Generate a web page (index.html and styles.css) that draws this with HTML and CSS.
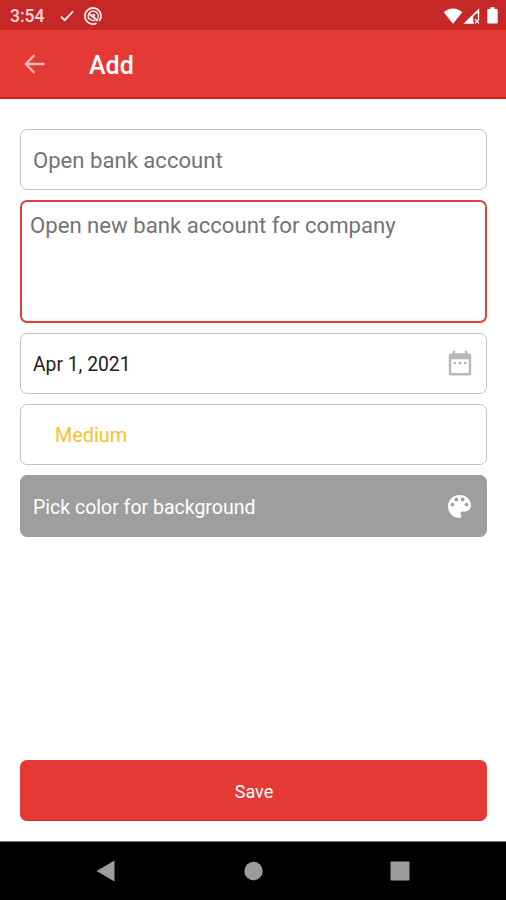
FILE: index.html
```html
<!DOCTYPE html>
<html lang="en">
<head>
<meta charset="utf-8">
<title>Add</title>
<link rel="stylesheet" href="styles.css">
</head>
<body>
<div class="screen">
  <div class="status-bar">
    <span class="clock">3:54</span>
    <svg class="status-check" width="14" height="12" viewBox="0 0 14 12"><path d="M1 6.6 4.7 10.2 13 1.4" fill="none" stroke="#ffeceb" stroke-width="1.8"/></svg>
    <svg class="status-app" width="18" height="18" viewBox="0 0 18 18" fill="none" stroke="#ffeceb"><path d="M12.500 16.200A8 8 0 1 1 15.200 14" stroke-width="1.800"/><path d="M12.800 12.700A5 5 0 1 0 5.300 12.300" stroke-width="1.500"/><path d="M4.800 6.500 13.500 13.700" stroke-width="1.900"/><path d="M5.300 11q1.700 3.200 5.500 2.500" stroke-width="1.400"/><path d="M7.800 7.200q2.200-1.200 3.200.4.800 1.400-.2 2.700Z" fill="#ffeceb" stroke="none"/></svg>
    <div class="status-right">
      <svg width="20" height="16" viewBox="0 0 20 16"><path d="M10 15.7.7 4.2C3.2 1.9 6.5.5 10 .5s6.8 1.4 9.3 3.7Z" fill="#fff"/></svg>
      <svg width="17" height="16" viewBox="0 0 17 16"><path d="M16.2.2V6h-1.7V4.2L10.2 8.6V14.2H11v1.6H.4Z" fill="#fff"/><path d="m12 11.2 4 4.2m0-4.2-4 4.2M15.500 3v8" stroke="#fff" stroke-width="1.3"/></svg>
      <svg class="battery" width="11" height="17" viewBox="0 0 11 17"><path d="M3.3.3h4.4v1.8h1.8q1.2 0 1.2 1.2v12q0 1.3-1.2 1.3h-8q-1.2 0-1.2-1.3v-12q0-1.2 1.2-1.2h1.8Z" fill="#fff"/></svg>
    </div>
  </div>
  <header class="app-bar">
    <svg class="back" width="22" height="20" viewBox="0 0 22 20"><path d="M20.500 10H2M10.5 1 1.8 10l8.7 9" fill="none" stroke="#fbb9b6" stroke-width="2.300"/></svg>
    <h1 class="title">Add</h1>
  </header>
  <main class="form">
    <div class="field field-name"><span>Open bank account</span></div>
    <div class="field field-note"><span>Open new bank account for company</span></div>
    <div class="field field-date">
      <span>Apr 1, 2021</span>
      <svg class="calendar" width="24" height="27" viewBox="0 0 24 27"><path fill="#bdb8b7" fill-rule="evenodd" d="M4.6.8h2.6v2.5h9.6V.8h2.6v2.5h1.3q2.5 0 2.5 2.5v17.3q0 2.5-2.5 2.5H3.3q-2.5 0-2.5-2.5V5.8q0-2.5 2.5-2.5h1.3ZM3.3 9.2v13.9h17.4V9.2ZM5.6 11.8h2.5v2.4H5.6Zm5.2 0h2.5v2.4h-2.5Zm5.1 0h2.5v2.4h-2.5Z"/></svg>
    </div>
    <div class="field field-priority"><span>Medium</span></div>
    <div class="field field-color">
      <span>Pick color for background</span>
      <svg class="palette" width="23" height="23" viewBox="3 3 18 18"><path fill="#fff" d="M12 3c-4.970 0-9 4.030-9 9s4.030 9 9 9c.83 0 1.500-.67 1.500-1.500 0-.39-.15-.74-.39-1.010-.23-.26-.38-.61-.38-.99 0-.83.67-1.500 1.500-1.500H16c2.760 0 5-2.240 5-5 0-4.420-4.030-8-9-8Zm-5.500 9c-.83 0-1.500-.67-1.500-1.500S5.670 9 6.500 9 8 9.670 8 10.500 7.330 12 6.500 12Zm3-4C8.670 8 8 7.330 8 6.500S8.670 5 9.500 5s1.500.67 1.500 1.500S10.330 8 9.500 8Zm5 0c-.83 0-1.500-.67-1.500-1.500S13.670 5 14.500 5s1.500.67 1.500 1.500S15.330 8 14.500 8Zm3 4c-.83 0-1.500-.67-1.500-1.500S16.670 9 17.500 9s1.500.67 1.500 1.500-.67 1.500-1.500 1.500Z"/></svg>
    </div>
    <button class="save">Save</button>
  </main>
  <nav class="nav-bar">
    <svg width="19" height="22" viewBox="0 0 19 22"><path d="M.5 11 18.500.6v20.800Z" fill="#9c9c9c"/></svg>
    <svg class="home" width="19" height="20" viewBox="0 0 19 20"><circle cx="9.500" cy="10" r="9.200" fill="#9c9c9c"/></svg>
    <svg width="20" height="20" viewBox="0 0 20 20"><rect x=".5" y=".5" width="19" height="19" rx="1" fill="#9c9c9c"/></svg>
  </nav>
</div>
</body>
</html>
```
FILE: styles.css
```css
* { box-sizing: border-box; }
body { margin: 0; background: #fff; font-family: Roboto, sans-serif; }
svg { display: block; flex: none; }
.screen { width: 506px; height: 900px; display: flex; flex-direction: column; overflow: hidden; }
.status-bar { height: 30px; flex: none; background: #c62828; display: flex; align-items: center; padding: 1px 8px 0 10px; }
.clock { width: 50px; font-size: 17.5px; line-height: 30px; color: #ffd9d6; font-weight: 500; }
.status-app { margin-left: 10px; }
.status-right { margin-left: auto; display: flex; align-items: center; }
.battery { margin-left: 7px; }
.app-bar { height: 69px; flex: none; background: #e53935; border-bottom: 2px solid #d3201d; display: flex; align-items: center; padding-left: 24px; }
.title { margin: 5px 0 0 43px; font-size: 25px; line-height: 32px; font-weight: 500; color: #fff; }
.form { flex: 1; display: flex; flex-direction: column; gap: 10px; padding: 30px 19px 20px 20px; }
.field { height: 61px; flex: none; border: 1.500px solid #c4c2c2; border-radius: 7px; display: flex; align-items: center; justify-content: space-between; padding: 2px 14px 0 12px; font-size: 19.500px; white-space: nowrap; }
.field-name { padding-top: 0; font-size: 22.100px; color: #747474; }
.field-note { height: 123px; border: 2px solid #e0413e; align-items: flex-start; padding: 10px 8px; font-size: 22.150px; color: #747474; }
.field-date { color: #222; font-size: 19.300px; }
.calendar { margin-top: -2px; }
.field-priority { color: #fbc02d; padding-left: 34px; font-size: 19.800px; }
.field-color { height: 62px; background: #9e9e9e; border-color: #9e9e9e; color: #fff; }
.palette { margin: -2px 1px 0 0; }
.save { height: 61px; margin: auto 0 0; border: 0; border-bottom: 1px solid #d42522; border-radius: 7px; background: #e53935; color: #fff; font: 400 18px Roboto, sans-serif; padding: 2px 0 0 1px; }
.nav-bar { height: 59px; flex: none; background: #000; border-top: 1px solid #777; display: flex; align-items: center; justify-content: space-between; padding: 0 96px; }
.home { margin-left: 2px; }
```
